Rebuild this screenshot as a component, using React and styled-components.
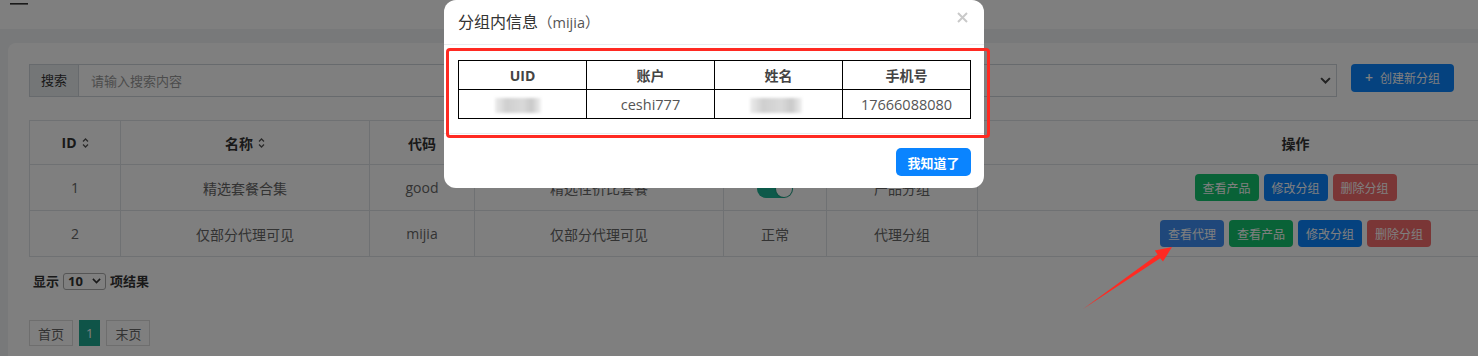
import React from "react";
import styled, { createGlobalStyle, css } from "styled-components";

const GlobalStyle = createGlobalStyle`
  html, body { margin: 0; padding: 0; }
  body {
    width: 1478px;
    height: 356px;
    overflow: hidden;
    background: #f0f2f5;
    font-family: "Open Sans", "Noto Sans CJK SC", sans-serif;
    color: #333;
  }
  * { box-sizing: border-box; }
`;

const Page = styled.div`
  position: relative;
  width: 1478px;
  height: 356px;
  display: flex;
  flex-direction: column;
  background: #f0f2f5;
  overflow: hidden;
`;

const TopBar = styled.header`
  height: 29px;
  flex-shrink: 0;
  background: #fff;
  padding-left: 10px;
  display: flex;
  align-items: flex-start;
`;

const Main = styled.main`
  flex: 1;
  padding: 14px 0 0 8px;
`;

const Card = styled.section`
  width: 1700px;
  height: 400px;
  background: #fff;
  border-top-left-radius: 8px;
  padding: 21px 0 0 21px;
`;

const Toolbar = styled.div`
  display: flex;
  align-items: flex-start;
  gap: 14px;
`;

const SearchGroup = styled.div`
  width: 1308px;
  height: 33px;
  display: flex;
  border: 1px solid #ced4da;
`;

const Addon = styled.span`
  padding: 0 11px;
  background: #e9ecef;
  border-right: 1px solid #ced4da;
  font-size: 13px;
  line-height: 31px;
  color: #333;
`;

const SearchInput = styled.input`
  flex: 1;
  border: none;
  outline: none;
  padding: 0 12px;
  font-family: inherit;
  font-size: 13px;
  color: #333;
  background: transparent;
  &::placeholder { color: #999; }
`;

const SelectBox = styled.div`
  width: 440px;
  display: flex;
  align-items: center;
  justify-content: flex-end;
  padding-right: 5px;
  color: #444;
`;

const CreateButton = styled.button`
  height: 28px;
  padding: 0 14px;
  display: inline-flex;
  align-items: center;
  gap: 7px;
  border: none;
  border-radius: 4px;
  background: #0a84ff;
  color: #fff;
  font-family: inherit;
  font-size: 12px;
`;

const Plus = styled.span`
  font-size: 14px;
  font-weight: 600;
  line-height: 1;
`;

const DataTable = styled.table`
  margin-top: 23px;
  width: 1584px;
  border-collapse: collapse;
  table-layout: fixed;
`;

const Th = styled.th`
  height: 44px;
  padding: 0;
  border: 1px solid #dee2e6;
  font-size: 14px;
  font-weight: 700;
  color: #333;
  text-align: center;
`;

const Td = styled.td`
  height: 46px;
  padding: 0;
  border: 1px solid #dee2e6;
  font-size: 14px;
  color: #666;
  text-align: center;
`;

const HeadLabel = styled.span`
  display: inline-flex;
  align-items: center;
  gap: 5px;
`;

const Actions = styled.div`
  display: flex;
  justify-content: center;
  gap: 5px;
`;

const variants = {
  agent: "#3f8ff5",
  product: "#13c46e",
  edit: "#0a84ff",
  danger: "#f56c6c",
};

const ActionBtn = styled.button`
  width: 64px;
  height: 27px;
  padding: 0;
  border: none;
  border-radius: 4px;
  font-family: inherit;
  font-size: 12px;
  color: #fff;
  background: ${(p) => variants[p.$variant]};
`;

const Switch = styled.span`
  display: inline-flex;
  justify-content: flex-end;
  align-items: center;
  width: 36px;
  height: 18px;
  padding: 1px;
  border-radius: 9px;
  background: #1ab394;
  vertical-align: middle;
  &::after {
    content: "";
    width: 16px;
    height: 16px;
    border-radius: 50%;
    background: #fff;
    box-shadow: 0 0 2px rgba(0, 0, 0, 0.4);
  }
`;

const LengthRow = styled.div`
  margin-top: 15px;
  margin-left: 4px;
  display: flex;
  align-items: center;
  gap: 4px;
  font-size: 13px;
  font-weight: 700;
  color: #333;
  line-height: 18px;
`;

const LengthSelect = styled.span`
  width: 43px;
  height: 17px;
  display: inline-flex;
  align-items: center;
  justify-content: space-between;
  padding: 0 4px 0 4px;
  border: 1px solid #aaa;
  border-radius: 3px;
  font-size: 13px;
  font-weight: 700;
`;

const Pager = styled.div`
  margin-top: 30px;
  display: flex;
  gap: 6px;
`;

const PageBtn = styled.span`
  height: 26px;
  padding: 0 ${(p) => (p.$active ? "6px" : "8px")};
  display: inline-flex;
  align-items: center;
  border: 1px solid #ddd;
  font-size: 13px;
  color: #666;
  background: #fff;
  ${(p) =>
    p.$active &&
    css`
      background: #1fa990;
      border-color: #1fa990;
      color: #fff;
    `}
`;

const Backdrop = styled.div`
  position: absolute;
  inset: 0;
  background: rgba(0, 0, 0, 0.5);
`;

const Modal = styled.div`
  position: absolute;
  top: 0;
  left: 444px;
  width: 540px;
  background: #fff;
  border-radius: 12px;
`;

const ModalHeader = styled.div`
  height: 45px;
  padding: 0 14px;
  display: flex;
  justify-content: space-between;
  align-items: center;
  border-bottom: 1px solid #e9ecef;
`;

const Title = styled.h5`
  margin: 0;
  font-size: 16px;
  font-weight: 400;
  line-height: 22px;
  color: #333;
`;

const Small = styled.small`
  font-size: 14.5px;
  color: #555;
`;

const Close = styled.span`
  align-self: flex-start;
  margin-top: 12px;
  margin-right: 2px;
  display: inline-flex;
`;

const ModalBody = styled.div`
  padding: 15px 13px 14px 14px;
`;

const InfoTable = styled.table`
  width: 100%;
  border-collapse: collapse;
  table-layout: fixed;
`;

const InfoTh = styled.th`
  height: 29px;
  padding: 0;
  border: 1px solid #000;
  font-size: 14px;
  font-weight: 700;
  color: #444;
  text-align: center;
`;

const InfoTd = styled.td`
  height: 29px;
  padding: 0;
  border: 1px solid #000;
  font-size: 14.5px;
  color: #555;
  text-align: center;
`;

const Blur = styled.span`
  display: inline-block;
  width: ${(p) => p.$w}px;
  height: 15px;
  margin-left: ${(p) => p.$shift || 0}px;
  vertical-align: middle;
  background: linear-gradient(90deg, #ececec 0%, #cfcfcf 25%, #d9d9d9 60%, #c9c9c9 80%, #f0f0f0 100%);
  filter: blur(1.5px);
`;

const ModalFooter = styled.div`
  padding: 14px 13px 12px;
  border-top: 1px solid #e9ecef;
  display: flex;
  justify-content: flex-end;
`;

const OkButton = styled.button`
  width: 75px;
  height: 28px;
  padding: 0;
  border: none;
  border-radius: 5px;
  background: #0a84ff;
  color: #fff;
  font-family: inherit;
  font-size: 13px;
  font-weight: 700;
`;

const Highlight = styled.div`
  position: absolute;
  top: 48px;
  left: 2px;
  width: 544px;
  height: 90px;
  border: 3px solid #ff2a22;
  border-radius: 4px;
  pointer-events: none;
`;

const Arrow = styled.svg`
  position: absolute;
  left: 1070px;
  top: 240px;
`;

const SortIcon = () => (
  <svg width="7" height="12" viewBox="0 0 7 12">
    <path d="M1 4.5 L3.5 2 L6 4.5 M1 7.5 L3.5 10 L6 7.5" fill="none" stroke="#555" strokeWidth="1.3" />
  </svg>
);

const Chevron = ({ size = 10, color = "#555" }) => (
  <svg width={size} height={size * 0.6} viewBox="0 0 10 6">
    <path d="M1 1 L5 5 L9 1" fill="none" stroke={color} strokeWidth="1.8" />
  </svg>
);

const rows = [
  { id: 1, name: "精选套餐合集", code: "good", desc: "精选性价比套餐", status: "switch", type: "产品分组", actions: ["product", "edit", "danger"] },
  { id: 2, name: "仅部分代理可见", code: "mijia", desc: "仅部分代理可见", status: "正常", type: "代理分组", actions: ["agent", "product", "edit", "danger"] },
];

const labels = { agent: "查看代理", product: "查看产品", edit: "修改分组", danger: "删除分组" };

export default function App() {
  return (
    <>
      <GlobalStyle />
      <Page>
        <TopBar>
          <svg width="18" height="6" viewBox="0 0 18 6">
            <rect x="0" y="3" width="18" height="1.6" fill="#333" />
          </svg>
        </TopBar>
        <Main>
          <Card>
            <Toolbar>
              <SearchGroup>
                <Addon>搜索</Addon>
                <SearchInput placeholder="请输入搜索内容" readOnly />
                <SelectBox>
                  <Chevron size={11} color="#444" />
                </SelectBox>
              </SearchGroup>
              <CreateButton>
                <Plus>+</Plus>
                创建新分组
              </CreateButton>
            </Toolbar>

            <DataTable>
              <colgroup>
                <col style={{ width: 91 }} />
                <col style={{ width: 249 }} />
                <col style={{ width: 105 }} />
                <col style={{ width: 249 }} />
                <col style={{ width: 103 }} />
                <col style={{ width: 151 }} />
                <col style={{ width: 636 }} />
              </colgroup>
              <thead>
                <tr>
                  <Th><HeadLabel>ID <SortIcon /></HeadLabel></Th>
                  <Th><HeadLabel>名称 <SortIcon /></HeadLabel></Th>
                  <Th>代码</Th>
                  <Th>描述</Th>
                  <Th>状态</Th>
                  <Th>类型</Th>
                  <Th>操作</Th>
                </tr>
              </thead>
              <tbody>
                {rows.map((r) => (
                  <tr key={r.id}>
                    <Td>{r.id}</Td>
                    <Td>{r.name}</Td>
                    <Td>{r.code}</Td>
                    <Td>{r.desc}</Td>
                    <Td>{r.status === "switch" ? <Switch /> : r.status}</Td>
                    <Td>{r.type}</Td>
                    <Td>
                      <Actions>
                        {r.actions.map((a) => (
                          <ActionBtn key={a} $variant={a}>{labels[a]}</ActionBtn>
                        ))}
                      </Actions>
                    </Td>
                  </tr>
                ))}
              </tbody>
            </DataTable>

            <LengthRow>
              显示
              <LengthSelect>
                10 <Chevron size={9} color="#333" />
              </LengthSelect>
              项结果
            </LengthRow>

            <Pager>
              <PageBtn>首页</PageBtn>
              <PageBtn $active>1</PageBtn>
              <PageBtn>末页</PageBtn>
            </Pager>
          </Card>
        </Main>

        <Backdrop />

        <Modal>
          <ModalHeader>
            <Title>
              分组内信息<Small>（mijia）</Small>
            </Title>
            <Close>
              <svg width="11" height="11" viewBox="0 0 11 11">
                <path d="M1 1 L10 10 M10 1 L1 10" stroke="#c9c9c9" strokeWidth="2" />
              </svg>
            </Close>
          </ModalHeader>
          <ModalBody>
            <InfoTable>
              <thead>
                <tr>
                  <InfoTh>UID</InfoTh>
                  <InfoTh>账户</InfoTh>
                  <InfoTh>姓名</InfoTh>
                  <InfoTh>手机号</InfoTh>
                </tr>
              </thead>
              <tbody>
                <tr>
                  <InfoTd><Blur $w={46} $shift={-10} /></InfoTd>
                  <InfoTd>ceshi777</InfoTd>
                  <InfoTd><Blur $w={52} $shift={-6} /></InfoTd>
                  <InfoTd>17666088080</InfoTd>
                </tr>
              </tbody>
            </InfoTable>
          </ModalBody>
          <ModalFooter>
            <OkButton>我知道了</OkButton>
          </ModalFooter>
          <Highlight />
        </Modal>

        <Arrow width="110" height="75" viewBox="0 0 110 75">
          <polygon
            points="13,69 87.6,14.6 84.8,10.6 102,7 93,21.6 90.2,18.2"
            fill="#ff2a22"
          />
        </Arrow>
      </Page>
    </>
  );
}
